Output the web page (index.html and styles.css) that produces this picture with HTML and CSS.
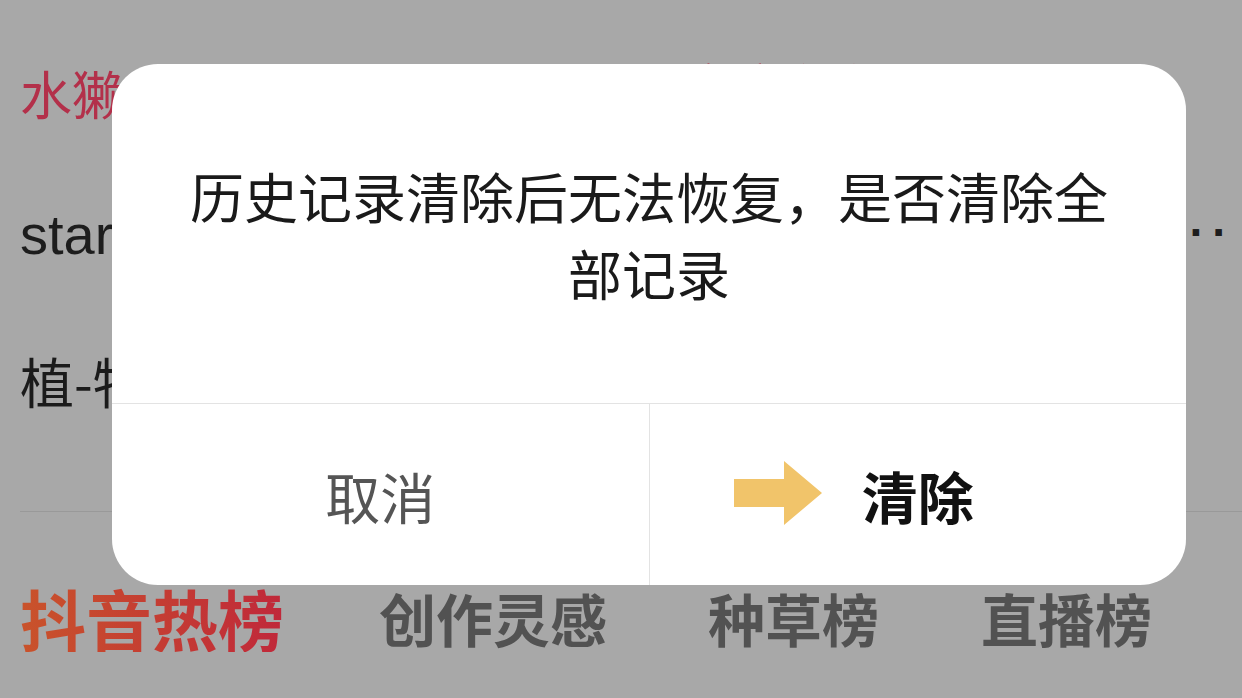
FILE: index.html
```html
<!DOCTYPE html>
<html lang="zh">
<head>
<meta charset="utf-8">
<link rel="stylesheet" href="styles.css">
</head>
<body>
<div class="page">
  <div class="row row-top">
    <span class="item red">水獭吃鱼</span>
    <span class="item red right-col">文学创作</span>
  </div>
  <div class="row row-mid">
    <span class="item latin">stardew valley</span>
    <span class="dots">..</span>
  </div>
  <div class="row row-third">
    <span class="item dark">植-物大战僵尸</span>
  </div>
  <div class="sep"></div>
  <div class="tabs">
    <span class="tab active">抖音热榜</span>
    <span class="tab">创作灵感</span>
    <span class="tab">种草榜</span>
    <span class="tab">直播榜</span>
  </div>
</div>

<div class="dialog">
  <div class="msg">历史记录清除后无法恢复，是否清除全部记录</div>
  <div class="actions">
    <div class="btn cancel">取消</div>
    <div class="btn confirm">
      <svg class="arrow" width="88" height="64" viewBox="0 0 88 64" aria-hidden="true">
        <path d="M0 18 H50 V0 L88 32 L50 64 V46 H0 Z" fill="#f1c46a"/>
      </svg>
      清除
    </div>
  </div>
</div>
</body>
</html>
```

FILE: styles.css
```css
html, body {
  margin: 0;
  padding: 0;
}
body {
  width: 1242px;
  height: 698px;
  overflow: hidden;
  background: #a8a8a8;
  font-family: "Noto Sans CJK SC", "Noto Sans", sans-serif;
  position: relative;
}
.page {
  display: flex;
  flex-direction: column;
  padding-left: 20px;
}
.row {
  display: flex;
  align-items: center;
  font-size: 52px;
  line-height: 70px;
  height: 70px;
}
.row-top {
  margin-top: 58px;
}
.row-top .red {
  color: #b3304a;
}
.right-col {
  margin-left: 455px;
  margin-top: -14px;
}
.row-mid {
  margin-top: 72px;
  justify-content: space-between;
}
.latin {
  font-family: "Liberation Sans", Arial, sans-serif;
  font-size: 56px;
  color: #1d1d1d;
}
.dots {
  font-family: "Liberation Sans", Arial, sans-serif;
  font-weight: 700;
  color: #1d1d1d;
  font-size: 46px;
  line-height: 40px;
  letter-spacing: 10px;
  margin-right: 7px;
  padding-bottom: 30px;
}
.row-third {
  margin-top: 76px;
}
.dark {
  color: #1b1b1b;
  font-size: 54px;
}
.sep {
  margin-top: 95px;
  height: 1px;
  background: #999999;
}
.tabs {
  display: flex;
  align-items: center;
  margin-top: 70px;
}
.tab {
  font-size: 57px;
  font-weight: 700;
  line-height: 70px;
  color: #525252;
}
.tab.active {
  font-size: 66px;
  background: linear-gradient(90deg, #c9532b, #c0283a);
  -webkit-background-clip: text;
  background-clip: text;
  color: transparent;
  margin-right: 95px;
}
.tab:nth-child(2) { margin-right: 101px; }
.tab:nth-child(3) { margin-right: 102px; }

.dialog {
  position: absolute;
  left: 112px;
  top: 64px;
  width: 1074px;
  height: 521px;
  background: #ffffff;
  border-radius: 46px;
  display: flex;
  flex-direction: column;
  overflow: hidden;
}
.msg {
  height: 339px;
  display: flex;
  align-items: center;
  justify-content: center;
  text-align: center;
  padding: 0 60px;
  box-sizing: border-box;
  font-size: 54px;
  line-height: 77px;
  color: #1a1a1a;
}
.actions {
  flex: 1;
  display: flex;
  border-top: 1px solid #e3e3e3;
}
.btn {
  flex: 1;
  display: flex;
  align-items: center;
  justify-content: center;
  font-size: 55px;
  position: relative;
}
.cancel {
  color: #555555;
  border-right: 1px solid #e3e3e3;
}
.confirm {
  color: #111111;
  font-weight: 700;
  font-size: 56px;
}
.arrow {
  position: absolute;
  left: 84px;
  top: 57px;
}
```
